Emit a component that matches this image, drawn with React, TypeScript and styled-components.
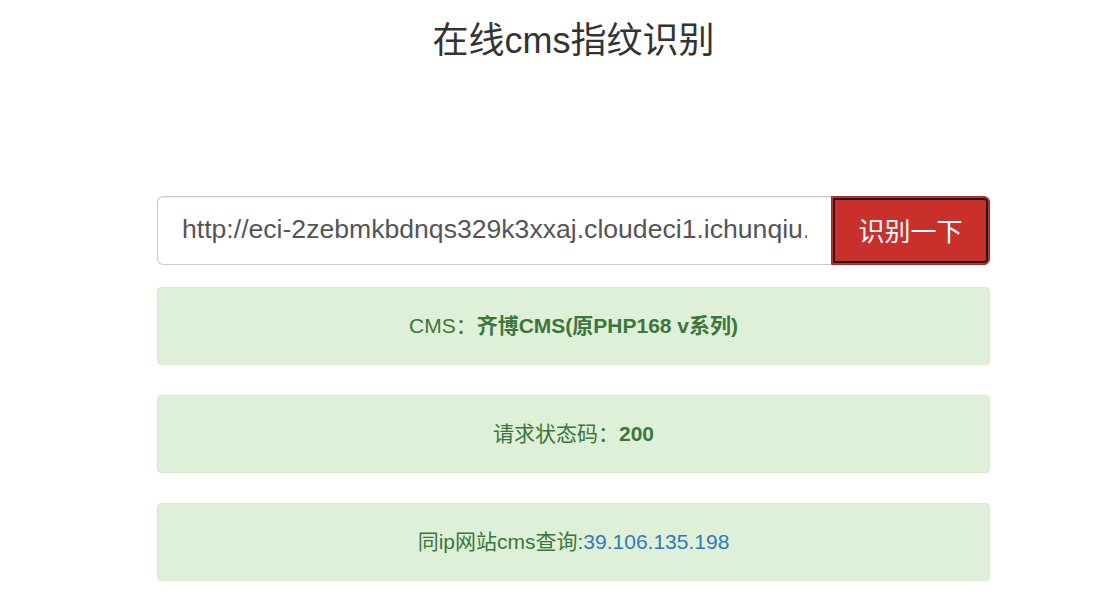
import React from "react";
import styled, { createGlobalStyle } from "styled-components";

const GlobalStyle = createGlobalStyle`
  html, body {
    margin: 0;
    padding: 0;
    background: #fff;
  }
  body {
    font-family: "Liberation Sans", Arial, "Noto Sans CJK SC", sans-serif;
    color: #333;
  }
`;

const Page = styled.div`
  width: 833px;
  margin-left: 157px;
  display: flex;
  flex-direction: column;
`;

const Title = styled.h1`
  margin: 21px 0 0;
  font-size: 36px;
  font-weight: 400;
  line-height: 1.1;
  text-align: center;
  color: #333;
`;

const SearchForm = styled.form`
  display: flex;
  margin-top: 135px;
  height: 69px;
`;

const UrlInput = styled.input`
  flex: 1;
  min-width: 0;
  height: 100%;
  box-sizing: border-box;
  padding: 0 24px 2px;
  font-family: inherit;
  font-size: 26.6px;
  color: #555;
  border: 1px solid #ccc;
  border-right: none;
  border-radius: 6px 0 0 6px;
  box-shadow: inset 0 1px 1px rgba(0, 0, 0, 0.075);
  outline: none;
`;

const SubmitButton = styled.button`
  width: 159px;
  height: 100%;
  box-sizing: border-box;
  padding-bottom: 2px;
  font-family: "Liberation Sans", Arial, "Noto Sans CJK SC", sans-serif;
  font-size: 26px;
  color: #fff;
  background: #c9302c;
  border: 1px solid #ac2925;
  border-radius: 0 6px 6px 0;
  outline: 2px solid #1c1c1c;
  outline-offset: -4px;
  cursor: pointer;
`;

const Alert = styled.div<{ $first?: boolean }>`
  margin-top: ${(p) => (p.$first ? "22px" : "30px")};
  padding: 26px 15px;
  font-size: 21px;
  line-height: 24px;
  text-align: center;
  color: #3c763d;
  background: #dff0d8;
  border: 1px solid #d6e9c6;
  border-radius: 4px;
`;

const Value = styled.strong`
  font-weight: 700;
`;

const IpLink = styled.a`
  color: #337ab7;
  text-decoration: none;
`;

export default function App() {
  return (
    <>
      <GlobalStyle />
      <Page>
        <Title>在线cms指纹识别</Title>
        <SearchForm onSubmit={(e) => e.preventDefault()}>
          <UrlInput
            defaultValue="http://eci-2zebmkbdnqs329k3xxaj.cloudeci1.ichunqiu.com/"
          />
          <SubmitButton type="submit">识别一下</SubmitButton>
        </SearchForm>
        <Alert $first>
          CMS：<Value>齐博CMS(原PHP168 v系列)</Value>
        </Alert>
        <Alert>
          请求状态码：<Value>200</Value>
        </Alert>
        <Alert>
          同ip网站cms查询:<IpLink href="#">39.106.135.198</IpLink>
        </Alert>
      </Page>
    </>
  );
}
